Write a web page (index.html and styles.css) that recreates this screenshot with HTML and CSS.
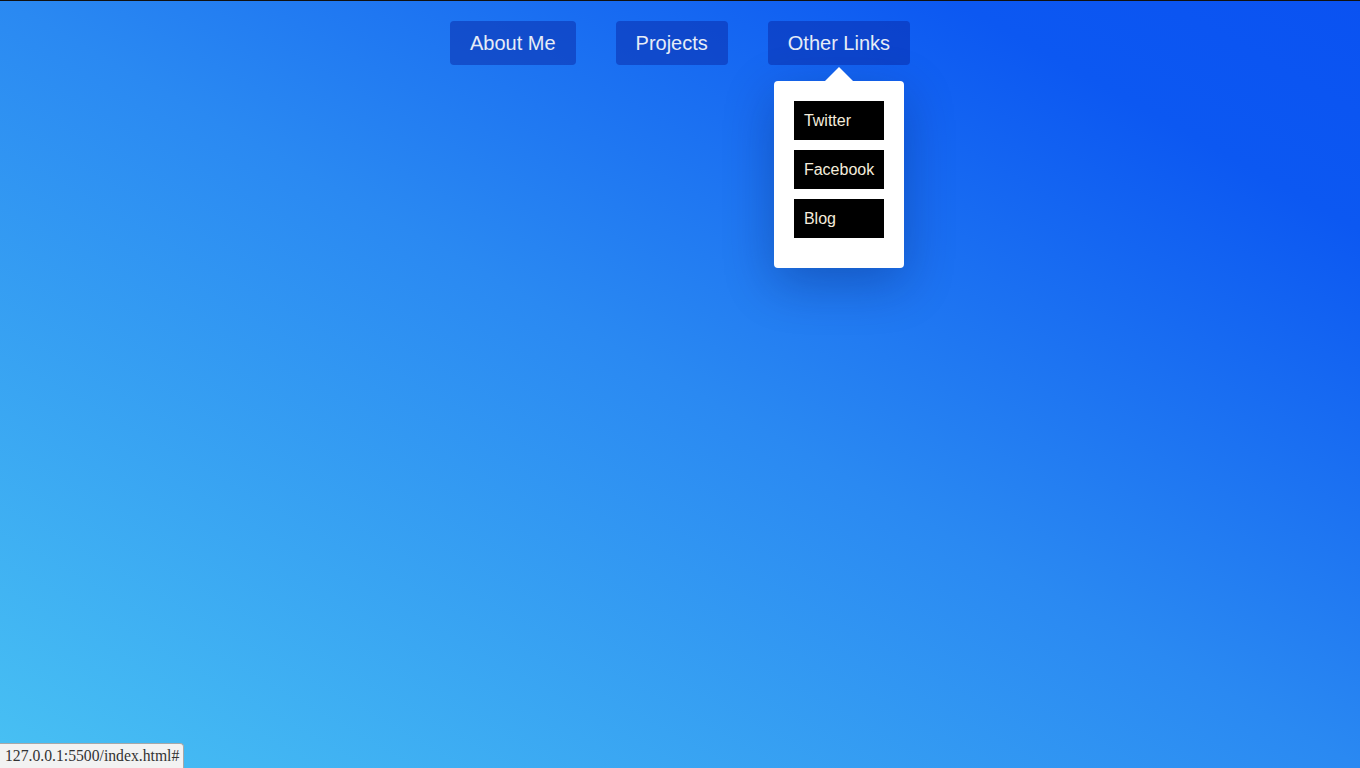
FILE: index.html
```html
<!DOCTYPE html>
<html lang="en">
<head>
<meta charset="utf-8">
<title>Menu</title>
<link rel="stylesheet" href="styles.css">
</head>
<body>
<div class="topline"></div>
<nav class="nav">
  <div class="nav-item"><a class="btn" href="#">About Me</a></div>
  <div class="nav-item"><a class="btn" href="#">Projects</a></div>
  <div class="nav-item open">
    <a class="btn" href="#">Other Links</a>
    <div class="dropdown">
      <a class="link" href="#">Twitter</a>
      <a class="link" href="#">Facebook</a>
      <a class="link" href="#">Blog</a>
    </div>
  </div>
</nav>
<div class="status">127.0.0.1:5500/index.html#</div>
</body>
</html>
```
FILE: styles.css
```css
html, body {
  margin: 0;
  padding: 0;
  height: 100%;
}
body {
  background: linear-gradient(to top right, #48c1f3 0%, #2a89f2 50%, #0c58f2 85%, #0a52f2 100%);
  font-family: "Liberation Sans", Arial, sans-serif;
  overflow: hidden;
}
.topline {
  height: 1px;
  background: #111;
}
.nav {
  display: flex;
  justify-content: center;
  gap: 40px;
  padding-top: 20px;
}
.nav-item {
  position: relative;
}
.btn {
  display: block;
  padding: 10px 20px;
  font-size: 20px;
  line-height: 24px;
  color: #e6ecf7;
  text-decoration: none;
  background: rgba(8, 40, 165, 0.5);
  border-radius: 4px;
}
.dropdown {
  position: absolute;
  top: 60px;
  left: 50%;
  transform: translateX(-50%);
  width: 90px;
  padding: 20px 20px 30px;
  background: #fff;
  border-radius: 4px;
  box-shadow: 0 15px 50px rgba(0, 20, 80, 0.3);
  display: flex;
  flex-direction: column;
  gap: 10px;
}
.dropdown::before {
  content: "";
  position: absolute;
  top: -14px;
  left: 50%;
  margin-left: -14px;
  border-left: 14px solid transparent;
  border-right: 14px solid transparent;
  border-bottom: 14px solid #fff;
}
.link {
  display: block;
  background: #000;
  color: #f4ecdc;
  text-decoration: none;
  font-size: 16px;
  line-height: 19px;
  padding: 10px;
}
.status {
  position: fixed;
  left: 0;
  bottom: 0;
  padding: 3px 4px 3px 5px;
  font-family: "Liberation Serif", "DejaVu Serif", serif;
  font-size: 15.7px;
  line-height: 18px;
  color: #333;
  background: #f2f2f2;
  border: 1px solid #a8a8a8;
  border-left: 0;
  border-bottom: 0;
  border-top-right-radius: 4px;
}
```
